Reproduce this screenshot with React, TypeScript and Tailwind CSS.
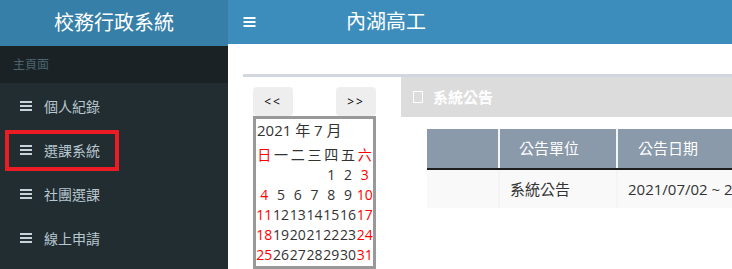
import React from 'react';

const font = { fontFamily: '"Open Sans", "Noto Sans CJK TC", sans-serif' };

const menu = ['個人紀錄', '選課系統', '社團選課', '線上申請'];

const weeks: (number | null)[][] = [
  [null, null, null, null, 1, 2, 3],
  [4, 5, 6, 7, 8, 9, 10],
  [11, 12, 13, 14, 15, 16, 17],
  [18, 19, 20, 21, 22, 23, 24],
  [25, 26, 27, 28, 29, 30, 31],
];

function Bars({ className = '' }: { className?: string }) {
  return (
    <svg viewBox="0 0 12 10" className={className} fill="currentColor">
      <rect x="0" y="0" width="12" height="2" />
      <rect x="0" y="4" width="12" height="2" />
      <rect x="0" y="8" width="12" height="2" />
    </svg>
  );
}

function Sidebar() {
  return (
    <aside className="w-[228px] shrink-0 flex flex-col">
      <div className="h-[46px] bg-[#367fa9] flex items-center justify-center text-white text-[20px]">
        校務行政系統
      </div>
      <div className="h-[37px] bg-[#1a2226] flex items-center pl-[13px] text-[12px] text-[#4b646f]">主頁面</div>
      <nav className="flex-1 bg-[#222d32] pt-[1px]">
        {menu.map((m, i) => (
          <div key={m} className="h-[44px] flex items-center pl-[5px]">
            <div
              className={`h-[41px] w-[114px] flex items-center gap-3 pl-[11px] text-[14px] text-[#b8c7ce] border-4 ${
                i === 1 ? 'border-[#ec1c24]' : 'border-transparent'
              }`}
            >
              <Bars className="w-3 h-[10px] text-[#c7d3d8]" />
              <span>{m}</span>
            </div>
          </div>
        ))}
      </nav>
    </aside>
  );
}

function Calendar() {
  return (
    <div className="w-[158px] shrink-0 pl-[10px] pt-[10px]">
      <div className="w-[123px] flex justify-between">
        <button className="w-10 h-[29px] bg-[#eeeeee] rounded-sm text-[12px] tracking-[0.15em] text-black">&lt;&lt;</button>
        <button className="w-10 h-[29px] bg-[#eeeeee] rounded-sm text-[12px] tracking-[0.15em] text-black">&gt;&gt;</button>
      </div>
      <div className="w-[123px] border-[3px] border-[#999999] text-[15px] text-[#333] leading-none pb-[1px]">
        <div className="pt-[4px] pl-[1px] h-[26px]">2021 年 7 月</div>
        <div className="grid grid-cols-7 text-[14px]">
          {['日', '一', '二', '三', '四', '五', '六'].map((d, i) => (
            <div key={d} className={`h-[20px] flex items-center justify-center ${i === 0 || i === 6 ? 'text-[#ff0000]' : ''}`}>
              {d}
            </div>
          ))}
          {weeks.flat().map((d, i) => (
            <div
              key={i}
              className={`h-[20px] flex items-center justify-center ${i % 7 === 0 || i % 7 === 6 ? 'text-[#ff0000]' : ''}`}
            >
              {d ?? ''}
            </div>
          ))}
        </div>
      </div>
    </div>
  );
}

function Notice() {
  return (
    <div className="flex-1 min-w-0">
      <div className="h-[40px] bg-[#dcdcdc] flex items-center pl-[12px] gap-[10px] text-white text-[15px] font-bold">
        <span className="w-[10px] h-[12px] border border-white" />
        <span>系統公告</span>
      </div>
      <div className="ml-[26px] mt-[12px] bg-[#f4f4f4] text-[15px] whitespace-nowrap overflow-hidden">
        <div className="flex h-[41px] bg-[#8a9aab] text-white border-b-2 border-[#1e1e1e]">
          <div className="w-[73px] shrink-0 border-r-2 border-[#f4f4f4]" />
          <div className="w-[118px] shrink-0 border-r-2 border-[#f4f4f4] flex items-center pl-[19px]">公告單位</div>
          <div className="flex-1 flex items-center pl-[20px]">公告日期</div>
        </div>
        <div className="flex h-[38px] text-[#333]">
          <div className="w-[73px] shrink-0 bg-[#f9f9f9] border-r-2 border-[#f4f4f4]" />
          <div className="w-[118px] shrink-0 bg-[#f9f9f9] border-r-2 border-[#f4f4f4] flex items-center pl-[10px]">系統公告</div>
          <div className="flex-1 min-w-0 bg-[#f9f9f9] flex items-center pl-[10px] overflow-hidden">2021/07/02 ~ 2021/07/31</div>
        </div>
      </div>
    </div>
  );
}

export default function App() {
  return (
    <div className="w-[732px] h-[269px] flex overflow-hidden bg-white" style={font}>
      <Sidebar />
      <main className="flex-1 min-w-0 flex flex-col">
        <header className="h-[46px] bg-[#3c8dbc] flex items-center text-white">
          <Bars className="ml-[15px] w-[13px] h-[10px]" />
          <span className="ml-[90px] text-[20px]">內湖高工</span>
        </header>
        <div className="pt-[30px] pl-[15px]">
          <div className="border-t-[3px] border-[#d2d6de] flex">
            <Calendar />
            <Notice />
          </div>
        </div>
      </main>
    </div>
  );
}
